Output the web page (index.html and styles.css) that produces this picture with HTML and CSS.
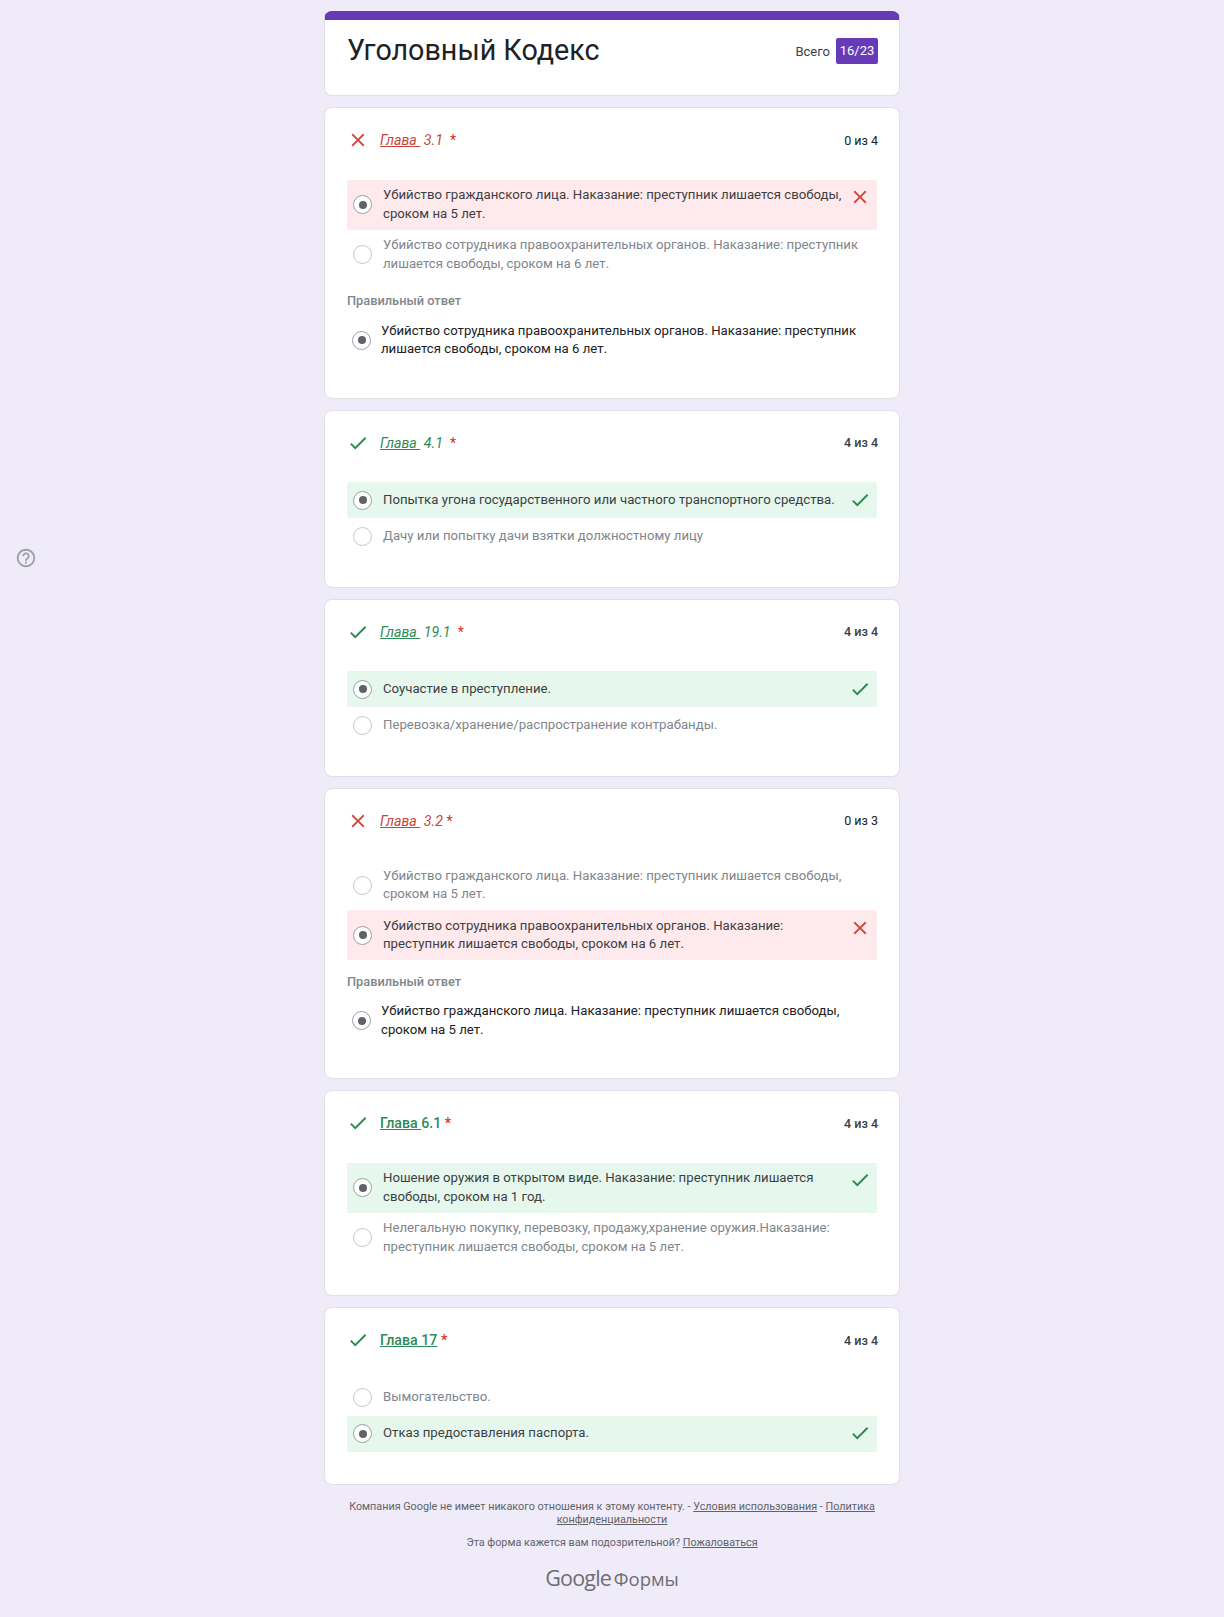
FILE: index.html
```html
<!DOCTYPE html>
<html lang="ru">

<head>
    <meta charset="UTF-8">
    <meta name="viewport" content="width=device-width, initial-scale=1.0">
    <title>Уголовный Кодекс</title>
    <link rel="stylesheet" href="styles.css">
</head>

<body>
    <svg class="sprite" xmlns="http://www.w3.org/2000/svg">
        <symbol id="ic-close" viewBox="0 0 24 24"><path d="M19 6.41 17.59 5 12 10.59 6.41 5 5 6.41 10.59 12 5 17.59 6.41 19 12 13.41 17.59 19 19 17.59 13.41 12z"/></symbol>
        <symbol id="ic-check" viewBox="0 0 24 24"><path d="M9 16.17 4.83 12l-1.42 1.41L9 19 21 7l-1.41-1.41z"/></symbol>
    </svg>

    <svg class="help" viewBox="0 0 24 24"><path d="M11 18h2v-2h-2v2zm1-16C6.48 2 2 6.48 2 12s4.48 10 10 10 10-4.48 10-10S17.52 2 12 2zm0 18c-4.41 0-8-3.59-8-8s3.59-8 8-8 8 3.59 8 8-3.59 8-8 8zm0-14c-2.21 0-4 1.79-4 4h2c0-1.1.9-2 2-2s2 .9 2 2c0 2-3 1.75-3 5h2c0-2.25 3-2.5 3-5 0-2.21-1.79-4-4-4z"/></svg>

    <main class="form">
        <div class="card title-card">
            <h1>Уголовный Кодекс</h1>
            <div class="total">Всего <span class="badge">16/23</span></div>
        </div>

        <!-- вопрос 3.1 -->
        <section class="card">
            <div class="q-head wrong">
                <svg class="ic"><use href="#ic-close"/></svg>
                <div class="q-title"><i><u>Глава&nbsp;</u> 3.1</i> <span class="req">&nbsp;*</span></div>
                <div class="score">0 из 4</div>
            </div>
            <div class="opt opt-wrong">
                <span class="radio on"></span>
                <span class="opt-text">Убийство гражданского лица. Наказание: преступник лишается свободы, сроком на 5 лет.</span>
                <svg class="ic"><use href="#ic-close"/></svg>
            </div>
            <div class="opt">
                <span class="radio"></span>
                <span class="opt-text">Убийство сотрудника правоохранительных органов. Наказание: преступник лишается свободы, сроком на 6 лет.</span>
            </div>
            <div class="right-label">Правильный ответ</div>
            <div class="opt opt-right">
                <span class="radio on"></span>
                <span class="opt-text">Убийство сотрудника правоохранительных органов. Наказание: преступник лишается свободы, сроком на 6 лет.</span>
            </div>
        </section>

        <!-- вопрос 4.1 -->
        <section class="card">
            <div class="q-head good">
                <svg class="ic"><use href="#ic-check"/></svg>
                <div class="q-title"><i><u>Глава&nbsp;</u> 4.1</i> <span class="req">&nbsp;*</span></div>
                <div class="score">4 из 4</div>
            </div>
            <div class="opt opt-good">
                <span class="radio on"></span>
                <span class="opt-text">Попытка угона государственного или частного транспортного средства.</span>
                <svg class="ic"><use href="#ic-check"/></svg>
            </div>
            <div class="opt">
                <span class="radio"></span>
                <span class="opt-text">Дачу или попытку дачи взятки должностному лицу</span>
            </div>
        </section>

        <!-- вопрос 19.1 -->
        <section class="card">
            <div class="q-head good">
                <svg class="ic"><use href="#ic-check"/></svg>
                <div class="q-title"><i><u>Глава&nbsp;</u> 19.1</i> <span class="req">&nbsp;*</span></div>
                <div class="score">4 из 4</div>
            </div>
            <div class="opt opt-good">
                <span class="radio on"></span>
                <span class="opt-text">Соучастие в преступление.</span>
                <svg class="ic"><use href="#ic-check"/></svg>
            </div>
            <div class="opt">
                <span class="radio"></span>
                <span class="opt-text">Перевозка/хранение/распространение контрабанды.</span>
            </div>
        </section>

        <!-- вопрос 3.2 -->
        <section class="card">
            <div class="q-head wrong">
                <svg class="ic"><use href="#ic-close"/></svg>
                <div class="q-title"><i><u>Глава&nbsp;</u> 3.2</i> <span class="req">*</span></div>
                <div class="score">0 из 3</div>
            </div>
            <div class="opt">
                <span class="radio"></span>
                <span class="opt-text">Убийство гражданского лица. Наказание: преступник лишается свободы, сроком на 5 лет.</span>
            </div>
            <div class="opt opt-wrong">
                <span class="radio on"></span>
                <span class="opt-text">Убийство сотрудника правоохранительных органов. Наказание: преступник лишается свободы, сроком на 6 лет.</span>
                <svg class="ic"><use href="#ic-close"/></svg>
            </div>
            <div class="right-label">Правильный ответ</div>
            <div class="opt opt-right">
                <span class="radio on"></span>
                <span class="opt-text">Убийство гражданского лица. Наказание: преступник лишается свободы, сроком на 5 лет.</span>
            </div>
        </section>

        <!-- вопрос 6.1 -->
        <section class="card">
            <div class="q-head good">
                <svg class="ic"><use href="#ic-check"/></svg>
                <div class="q-title bold"><u>Глава&nbsp;</u>6.1 <span class="req">*</span></div>
                <div class="score">4 из 4</div>
            </div>
            <div class="opt opt-good">
                <span class="radio on"></span>
                <span class="opt-text">Ношение оружия в открытом виде. Наказание: преступник лишается свободы, сроком на 1 год.</span>
                <svg class="ic"><use href="#ic-check"/></svg>
            </div>
            <div class="opt">
                <span class="radio"></span>
                <span class="opt-text">Нелегальную покупку, перевозку, продажу,хранение оружия.Наказание: преступник лишается свободы, сроком на 5 лет.</span>
            </div>
        </section>

        <!-- вопрос 17 -->
        <section class="card">
            <div class="q-head good">
                <svg class="ic"><use href="#ic-check"/></svg>
                <div class="q-title bold"><u>Глава 17</u> <span class="req">*</span></div>
                <div class="score">4 из 4</div>
            </div>
            <div class="opt">
                <span class="radio"></span>
                <span class="opt-text">Вымогательство.</span>
            </div>
            <div class="opt opt-good">
                <span class="radio on"></span>
                <span class="opt-text">Отказ предоставления паспорта.</span>
                <svg class="ic"><use href="#ic-check"/></svg>
            </div>
        </section>

        <footer class="foot">
            <p class="foot-line">Компания Google не имеет никакого отношения к этому контенту. - <a href="#">Условия использования</a> - <a href="#">Политика</a><br><a href="#">конфиденциальности</a></p>
            <p class="foot-line">Эта форма кажется вам подозрительной? <a href="#">Пожаловаться</a></p>
            <div class="logo"><span class="logo-g">Google</span> <span class="logo-f">Формы</span></div>
        </footer>
    </main>
</body>

</html>
```

FILE: styles.css
```css
body {
    font-family: Roboto, "Liberation Sans", sans-serif;
    background-color: #f0ebf8;
    color: #202124;
    margin: 0;
    padding: 0;
}

.sprite {
    display: none;
}

.help {
    position: fixed;
    left: 15px;
    top: 547px;
    width: 22px;
    height: 22px;
    fill: #9aa0a6;
}

.form {
    width: 576px;
    margin: 0 auto;
    padding: 11px 0 0;
    display: flex;
    flex-direction: column;
    gap: 11px;
}

.card {
    background-color: #fff;
    border: 1px solid #e2dfe8;
    border-radius: 8px;
    box-sizing: border-box;
    padding: 22px 22px 32.5px;
}

.title-card {
    height: 85px;
    border-top: 9px solid #673ab7;
    padding: 10px 22px 0;
    display: flex;
    align-items: flex-start;
    justify-content: space-between;
}

.title-card h1 {
    margin: 0;
    font-size: 28.7px;
    font-weight: 400;
    line-height: 40px;
}

.total {
    font-size: 13px;
    color: #3c4043;
    display: flex;
    align-items: center;
    gap: 6px;
    height: 26px;
    margin: 8px -1px 0 0;
}

.badge {
    background-color: #673ab7;
    color: #fff;
    border-radius: 2px;
    width: 42px;
    height: 26px;
    line-height: 26px;
    text-align: center;
}

.q-head {
    display: flex;
    align-items: center;
    height: 20px;
    margin-bottom: 29.5px;
}

.q-head .ic {
    margin-right: 11px;
}

.ic {
    width: 22px;
    height: 22px;
    flex: none;
}

.wrong,
.wrong .ic,
.opt-wrong .ic {
    color: #c5463b;
    fill: #d2453b;
}

.good,
.good .ic,
.opt-good .ic {
    color: #2e8b57;
    fill: #2b8a4e;
}

.q-title {
    flex: 1;
    font-size: 14.2px;
    font-weight: 400;
}

.q-title.bold {
    font-weight: 500;
}

.req {
    color: #d93025;
}

.score {
    font-size: 12.5px;
    font-weight: 500;
    color: #3c4043;
    margin-right: -1px;
}

.wrong .score {
    font-weight: 400;
    color: #202124;
}

.opt {
    display: flex;
    align-items: center;
    min-height: 36px;
    padding: 6.5px 6px 6.5px 6px;
    box-sizing: border-box;
    border-radius: 2px;
    font-size: 13.2px;
    line-height: 18.5px;
    color: #80868b;
}

.opt-wrong {
    background-color: #feeaed;
    color: #3c4043;
}

.opt-good {
    background-color: #e6f8ee;
    color: #3c4043;
}

.opt-right {
    color: #202124;
    padding-left: 5px;
}

.opt-right .opt-text {
    margin-left: 10px;
}

.opt-wrong .ic,
.opt-good .ic {
    align-self: flex-start;
    margin-left: auto;
}

.radio {
    width: 19px;
    height: 19px;
    flex: none;
    box-sizing: border-box;
    border: 1.5px solid #c4c7cb;
    border-radius: 50%;
    background-color: #fff;
    display: flex;
    align-items: center;
    justify-content: center;
}

.radio.on {
    border-color: #9aa0a6;
}

.radio.on::after {
    content: "";
    width: 8px;
    height: 8px;
    border-radius: 50%;
    background-color: #5f6368;
}

.opt-text {
    margin-left: 11px;
    margin-right: 2px;
}

.right-label {
    font-size: 12.8px;
    font-weight: 500;
    line-height: 18px;
    color: #80868b;
    margin: 12.5px 0 5px;
}

.foot {
    text-align: center;
    font-size: 10.8px;
    color: #5f6368;
    padding: 0 20px 27px;
    margin-top: 3.5px;
}

.foot a {
    color: #5f6368;
}

.foot-line {
    margin: 0 0 9px;
    line-height: 13.5px;
}

.logo {
    margin-top: 14px;
    color: #6b6f74;
    line-height: 30px;
}

.logo-g {
    font-family: "Open Sans", sans-serif;
    font-size: 21.5px;
    font-weight: 500;
    letter-spacing: -0.8px;
}

.logo-f {
    font-family: "Open Sans", sans-serif;
    font-size: 18.5px;
}
```
